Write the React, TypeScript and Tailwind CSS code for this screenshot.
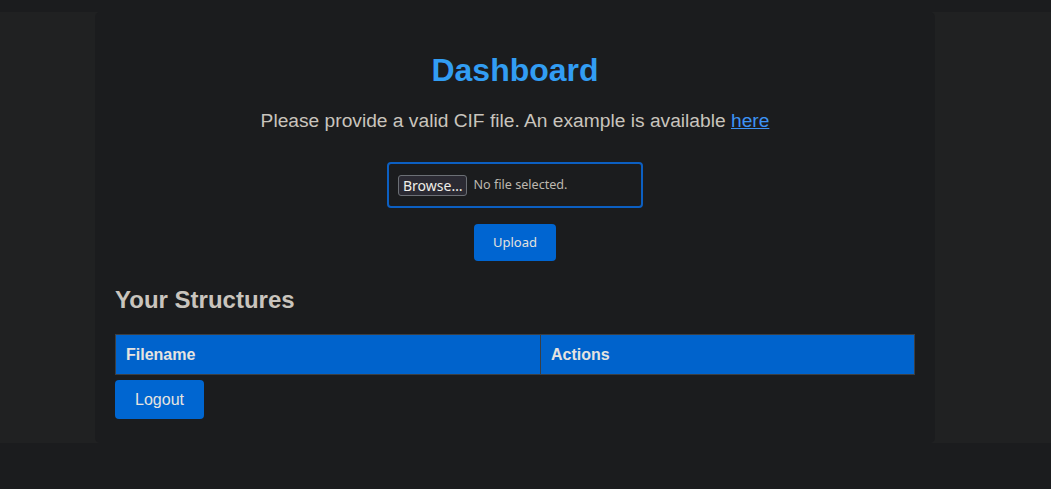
import React from "react";

export default function App() {
  return (
    <div
      className="min-h-[489px] bg-[#1b1c1e] pt-[12px]"
      style={{ fontFamily: '"Liberation Sans", Arial, sans-serif' }}
    >
      {/* Outer band */}
      <div className="bg-[#202122]">
        {/* Card */}
        <div className="ml-[95px] w-[840px] rounded-[5px] bg-[#1b1c1e] px-[20px] pt-[40px] pb-[24px]">
          <h1 className="text-center text-[32px] leading-[37px] font-bold text-[#329df3]">
            Dashboard
          </h1>
          <p className="mt-[21px] text-center text-[19.2px] leading-[22px] text-[#c9c4bd]">
            Please provide a valid CIF file. An example is available{" "}
            <a href="#" className="text-[#3d93f5] underline">
              here
            </a>
          </p>

          {/* File picker */}
          <div className="mt-[30px] flex justify-center">
            <div
              className="flex h-[46px] w-[256px] items-center gap-[6px] rounded-[4px] border-2 border-[#0c5fc2] px-[9px]"
              style={{ fontFamily: '"Noto Sans", "Open Sans", sans-serif' }}
            >
              <span className="flex h-[21px] items-center rounded-[3px] border border-[#6b6f75] bg-[#2b2a33] px-[4px] text-[14px] text-[#f0eee9]">
                Browse…
              </span>
              <span className="text-[12.6px] text-[#bdb8b0]">No file selected.</span>
            </div>
          </div>

          <div className="mt-[16px] flex justify-center">
            <button
              className="h-[37px] w-[82px] rounded-[4px] bg-[#0065d1] text-[13px] text-[#e4e2de]"
              style={{ fontFamily: '"Noto Sans", "Open Sans", sans-serif' }}
            >
              Upload
            </button>
          </div>

          <h2 className="mt-[25px] text-[24px] leading-[28px] font-bold text-[#c9c4bd]">
            Your Structures
          </h2>

          {/* Table */}
          <table className="mt-[20px] w-full border-collapse">
            <thead>
              <tr className="bg-[#0063cc]">
                <th className="w-[425px] border border-[#3b3f44] px-[10px] py-[10px] text-left text-[16px] leading-[19px] font-bold text-[#e6e4e0]">
                  Filename
                </th>
                <th className="border border-[#3b3f44] px-[10px] py-[10px] text-left text-[16px] leading-[19px] font-bold text-[#e6e4e0]">
                  Actions
                </th>
              </tr>
            </thead>
          </table>

          <button className="mt-[5px] h-[39px] w-[89px] rounded-[4px] bg-[#0066d1] text-[16px] text-[#e6e4e0]">
            Logout
          </button>
        </div>
      </div>
    </div>
  );
}
